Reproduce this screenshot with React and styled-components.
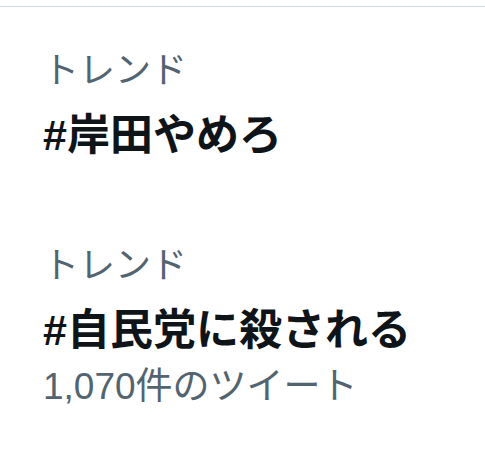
import React from "react";
import styled, { createGlobalStyle } from "styled-components";

const GlobalStyle = createGlobalStyle`
  html, body {
    margin: 0;
    padding: 0;
    background: #ffffff;
  }
  body {
    font-family: "Liberation Sans", "Noto Sans CJK JP", sans-serif;
  }
`;

const trends = [
  { label: "トレンド", tag: "#岸田やめろ" },
  { label: "トレンド", tag: "#自民党に殺される", count: "1,070件のツイート" },
];

const App = () => {
  return (
    <>
      <GlobalStyle />
      <Panel>
        <Divider />
        <List>
          {trends.map((t, i) => (
            <TrendItem key={i}>
              <Meta>{t.label}</Meta>
              <Tag>{t.tag}</Tag>
              {t.count && <Count>{t.count}</Count>}
            </TrendItem>
          ))}
        </List>
      </Panel>
    </>
  );
};

const Panel = styled.div`
  width: 485px;
  padding-top: 6px;
`;

const Divider = styled.div`
  height: 1px;
  background-color: #cfd9de;
`;

const List = styled.div`
  display: flex;
  flex-direction: column;
  padding-top: 40px;
`;

const TrendItem = styled.div`
  display: flex;
  flex-direction: column;
  padding: 0 44px 79px 43px;

  &:last-child {
    padding-bottom: 30px;
  }
`;

const Meta = styled.div`
  color: #536471;
  font-size: 36px;
  line-height: 48px;
`;

const Tag = styled.div`
  margin-top: 12px;
  color: #0f1419;
  font-size: 43px;
  font-weight: 700;
  line-height: 56px;
`;

const Count = styled.div`
  margin-top: 4px;
  color: #536471;
  font-size: 37px;
  line-height: 50px;
`;

export default App;
